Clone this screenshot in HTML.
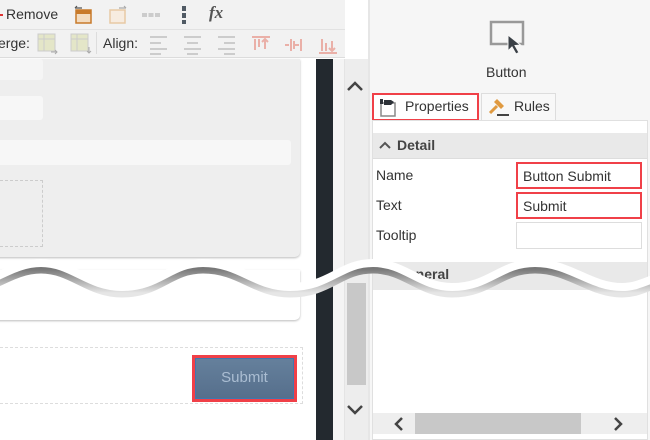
<!DOCTYPE html>
<html><head><meta charset="utf-8"><style>
*{box-sizing:border-box;margin:0;padding:0}
body{width:650px;height:440px;overflow:hidden;position:relative;background:#fff;font-family:"Liberation Sans","DejaVu Sans",sans-serif;color:#333}
.a{position:absolute}
.t{font-size:14px;color:#333}
</style></head><body>
<!-- left toolbar -->
<div class="a" style="left:0;top:0;width:345px;height:58px;background:#f2f2f2;border-bottom:1px solid #ddd"></div>
<div class="a" style="left:0;top:29px;width:345px;height:1px;background:#e2e2e2"></div>
<div class="a" style="left:-2px;top:14px;width:5px;height:2px;background:#d33"></div>
<div class="a t" style="left:6px;top:6px">Remove</div>
<svg class="a" style="left:74px;top:5px" width="20" height="20"><rect x="2" y="5" width="15" height="13" fill="#f3dcc0" stroke="#c87a2a" stroke-width="1.5"/><rect x="2" y="5" width="15" height="4" fill="#c87a2a"/><path d="M1 3h7M1 3l2-2" stroke="#555" stroke-width="1.2" fill="none"/></svg>
<svg class="a" style="left:108px;top:5px" width="20" height="20"><rect x="2" y="5" width="15" height="13" fill="#f7ece0" stroke="#e8c9a5" stroke-width="1.5"/><path d="M11 3h7M18 3l-2-2" stroke="#aaa" stroke-width="1.2" fill="none"/></svg>
<div class="a" style="left:142px;top:13px;width:18px;height:4px;background:repeating-linear-gradient(90deg,#ccc 0 5px,transparent 5px 6.5px)"></div>
<div class="a" style="left:182px;top:6px;width:4px;height:18px;background:repeating-linear-gradient(#505a64 0 5px,transparent 5px 7px)"></div>
<div class="a" style="left:209px;top:3px;font:italic bold 17px 'Liberation Serif',serif;color:#555">fx</div>
<div class="a t" style="left:-2px;top:35px">erge:</div>
<svg class="a" style="left:37px;top:33px" width="22" height="22"><rect x="1" y="1" width="17" height="17" fill="#e4e6c8" stroke="#ccc"/><path d="M1 6h17M7 1v17" stroke="#ccc"/><path d="M14 19h6M18 17l2 2-2 2" stroke="#aaa" fill="none"/></svg>
<svg class="a" style="left:70px;top:33px" width="22" height="22"><rect x="1" y="1" width="17" height="17" fill="#e4e6c8" stroke="#ccc"/><path d="M1 6h17M7 1v17" stroke="#ccc"/><path d="M19 14v6M17 18l2 2 2-2" stroke="#aaa" fill="none"/></svg>
<div class="a" style="left:96px;top:32px;width:1px;height:22px;background:#ddd"></div>
<div class="a t" style="left:103px;top:35px">Align:</div>
<svg class="a" style="left:149px;top:35px" width="200" height="20" fill="none" stroke-width="2">
<path d="M1 2h17M1 8h11M1 14h17M1 19h11" stroke="#ccc"/>
<path d="M35 2h17M38 8h11M35 14h17M38 19h11" stroke="#ccc"/>
<path d="M69 2h17M75 8h11M69 14h17M75 19h11" stroke="#ccc"/>
<path d="M103 2h18M106 4v11M110 4v8M116 14v-10M113 7l3-3 3 3" stroke="#eab0a8"/>
<path d="M136 10h4M146 10h4M142 4v12M145 6v8M152 4v12" stroke="#eab0a8"/>
<path d="M170 18h18M173 4v12M177 8v8M183 6v10M180 13l3 3 3-3" stroke="#eab0a8"/>
</svg>
<!-- canvas -->
<div class="a" style="left:0;top:59px;width:316px;height:381px;background:#fff"></div>
<div class="a" style="left:-10px;top:59px;width:310px;height:198px;background:#eeeeee;border-radius:0 0 5px 0;box-shadow:0 1px 2px #bbb"></div>
<div class="a" style="left:-5px;top:59px;width:48px;height:21px;background:#f5f5f5;border-radius:3px"></div>
<div class="a" style="left:-5px;top:96px;width:48px;height:24px;background:#f7f7f7;border-radius:3px"></div>
<div class="a" style="left:-5px;top:140px;width:296px;height:25px;background:#f7f7f7;border-radius:3px"></div>
<div class="a" style="left:-5px;top:180px;width:48px;height:67px;border:1px dashed #ccc"></div>
<div class="a" style="left:-10px;top:270px;width:310px;height:50px;background:#fff;border-radius:0 0 5px 0;box-shadow:0 1px 2px #bbb"></div>
<div class="a" style="left:-5px;top:347px;width:308px;height:57px;border:1px dashed #ddd"></div>
<div class="a" style="left:192px;top:355px;width:105px;height:47px;border:3px solid #f04048;background:#5a7696;padding:0"><div style="border:1px solid #3f77b0;height:100%;background:linear-gradient(#65809c,#566f8c);color:#aabdd2;font-size:15px;text-align:center;line-height:38px">Submit</div></div>
<!-- dark bar -->
<div class="a" style="left:316px;top:59px;width:17px;height:381px;background:#23292f"></div>
<div class="a" style="left:333px;top:59px;width:35px;height:381px;background:#ededed"></div>
<div class="a" style="left:333px;top:59px;width:12px;height:381px;background:#f4f4f4;border-right:1px solid #e4e4e4"></div>
<svg class="a" style="left:346px;top:80px" width="18" height="12"><path d="M2 10l7-7 7 7" stroke="#444" stroke-width="2.5" fill="none"/></svg>
<div class="a" style="left:347px;top:283px;width:19px;height:102px;background:#c8c8c8"></div>
<svg class="a" style="left:346px;top:404px" width="18" height="12"><path d="M2 2l7 7 7-7" stroke="#444" stroke-width="2.5" fill="none"/></svg>
<!-- right panel -->
<div class="a" style="left:368px;top:0;width:282px;height:440px;background:#f6f6f6;border-left:2px solid #e6e6e6"></div>
<svg class="a" style="left:489px;top:20px" width="40" height="36"><rect x="2" y="2" width="32" height="22" fill="none" stroke="#999" stroke-width="2.5"/><path d="M19 15l0 16 4-4 4 7 3-1.5-4-7 5.5-0.5z" fill="#3a4046" stroke="#f6f6f6" stroke-width="1"/></svg>
<div class="a t" style="left:486px;top:64px">Button</div>
<div class="a" style="left:372px;top:93px;width:107px;height:28px;border:2px solid #f04048;background:#fff"></div>
<svg class="a" style="left:378px;top:97px" width="22" height="20"><rect x="3" y="6" width="14" height="13" fill="#fff" stroke="#888" stroke-width="1.5"/><path d="M2 2h3v5H2zM6 3h7l3 2-3 3H6z" fill="#2d3238"/></svg>
<div class="a t" style="left:405px;top:98px">Properties</div>
<div class="a" style="left:481px;top:93px;width:75px;height:28px;border:1px solid #ddd;border-bottom:none;background:#f8f8f8"></div>
<svg class="a" style="left:488px;top:97px" width="22" height="20"><path d="M9 2l7 7-3 3-7-7z" fill="#e09a40"/><path d="M9 9L2 16" stroke="#e09a40" stroke-width="3"/><path d="M9 18h12" stroke="#444" stroke-width="2"/></svg>
<div class="a t" style="left:514px;top:98px">Rules</div>
<div class="a" style="left:372px;top:120px;width:276px;height:320px;background:#fff;border:1px solid #e0e0e0"></div>
<div class="a" style="left:373px;top:133px;width:274px;height:26px;background:#e9e9e9;border-bottom:1px solid #ddd"></div>
<svg class="a" style="left:378px;top:140px" width="14" height="10"><path d="M2 8l5-5 5 5" stroke="#555" stroke-width="2" fill="none"/></svg>
<div class="a" style="left:397px;top:137px;font-size:14px;font-weight:bold;color:#444">Detail</div>
<div class="a t" style="left:376px;top:167px">Name</div>
<div class="a t" style="left:376px;top:197px">Text</div>
<div class="a t" style="left:376px;top:227px">Tooltip</div>
<div class="a t" style="left:516px;top:162px;width:126px;height:27px;border:2px solid #f04048;padding:4px 0 0 5px">Button Submit</div>
<div class="a t" style="left:516px;top:192px;width:126px;height:27px;border:2px solid #f04048;padding:4px 0 0 5px">Submit</div>
<div class="a" style="left:516px;top:222px;width:126px;height:27px;border:1px solid #ddd"></div>
<div class="a" style="left:373px;top:262px;width:274px;height:28px;background:#e9e9e9"></div>
<div class="a" style="left:397px;top:266px;font-size:14px;font-weight:bold;color:#444">General</div>
<div class="a" style="left:373px;top:413px;width:274px;height:21px;background:#eee"></div>
<div class="a" style="left:415px;top:413px;width:166px;height:21px;background:#c8c8c8"></div>
<svg class="a" style="left:393px;top:416px" width="12" height="16"><path d="M9 2L3 8l6 6" stroke="#444" stroke-width="2.5" fill="none"/></svg>
<svg class="a" style="left:612px;top:416px" width="12" height="16"><path d="M3 2l6 6-6 6" stroke="#444" stroke-width="2.5" fill="none"/></svg>
<!-- torn wave -->
<svg class="a" style="left:0;top:240px" width="650" height="80">
<defs><linearGradient id="g" x1="0" y1="0" x2="0" y2="1"><stop offset="0" stop-color="#777"/><stop offset="1" stop-color="#e6e6e6"/></linearGradient></defs>
<path d="M-40,47 C-10,47 10,23 41,23 C72,23 88,47 122,47 C160,47 170,23 203,23 C240,23 255,47 290,47 C330,47 340,23 373,23 C405,23 420,47 452,47 C490,47 500,23 535,23 C570,23 590,47 622,47 C640,47 650,38 680,30" stroke="url(#g)" stroke-width="9" fill="none" transform="translate(0,6)"/>
<path d="M-40,47 C-10,47 10,23 41,23 C72,23 88,47 122,47 C160,47 170,23 203,23 C240,23 255,47 290,47 C330,47 340,23 373,23 C405,23 420,47 452,47 C490,47 500,23 535,23 C570,23 590,47 622,47 C640,47 650,38 680,30" stroke="#fff" stroke-width="8" fill="none"/>
</svg>
</body></html>
